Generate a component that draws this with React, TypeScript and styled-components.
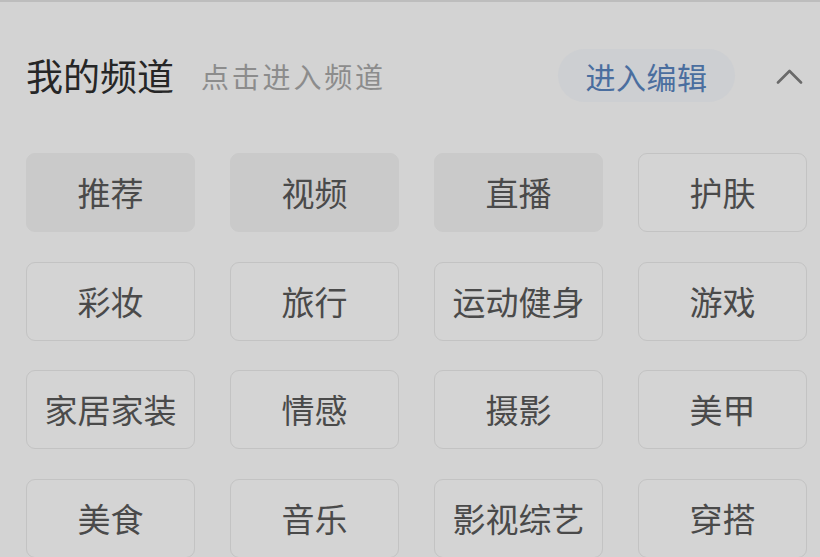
import React from "react";
import styled, { createGlobalStyle } from "styled-components";

const Global = createGlobalStyle`
  html, body { margin: 0; padding: 0; background: #d3d3d3; }
  body { font-family: "Noto Sans CJK SC", "Noto Sans", sans-serif; }
`;

const Page = styled.div`
  width: 820px;
  height: 557px;
  box-sizing: border-box;
  overflow: hidden;
  background: #d3d3d3;
  border-top: 2px solid #bdbdbd;
  padding: 0 13px 0 26px;
`;

const Header = styled.div`
  display: flex;
  align-items: center;
  height: 53px;
  margin-top: 47px;
`;

const Title = styled.div`
  font-size: 37px;
  color: #262626;
  line-height: 1;
`;

const Subtitle = styled.div`
  margin-left: 27px;
  font-size: 28px;
  letter-spacing: 2.8px;
  color: #8c8c8c;
  line-height: 1;
`;

const EditPill = styled.div`
  margin-left: auto;
  width: 177px;
  height: 53px;
  border-radius: 27px;
  background: #cdcfd2;
  display: flex;
  align-items: center;
  justify-content: center;
  font-size: 30px;
  letter-spacing: 0.5px;
  color: #4a6e9f;
  line-height: 1;
`;

const Chevron = styled.div`
  margin-left: 41px;
  margin-right: 4px;
  width: 27px;
  height: 16px;
  display: flex;
`;

const Grid = styled.div`
  margin-top: 51px;
  display: grid;
  grid-template-columns: repeat(4, 169px);
  grid-auto-rows: 79px;
  column-gap: 35px;
  row-gap: 29.5px;
`;

const Tile = styled.div<{ $fixed?: boolean }>`
  box-sizing: border-box;
  display: flex;
  align-items: center;
  justify-content: center;
  font-size: 33px;
  color: #4a4a4a;
  line-height: 1;
  border-radius: 9px;
  background: ${(p) => (p.$fixed ? "#cacaca" : "#d4d4d4")};
  border: 1.5px solid ${(p) => (p.$fixed ? "#cacaca" : "#c3c3c3")};
`;

const channels: { name: string; fixed?: boolean }[] = [
  { name: "推荐", fixed: true },
  { name: "视频", fixed: true },
  { name: "直播", fixed: true },
  { name: "护肤" },
  { name: "彩妆" },
  { name: "旅行" },
  { name: "运动健身" },
  { name: "游戏" },
  { name: "家居家装" },
  { name: "情感" },
  { name: "摄影" },
  { name: "美甲" },
  { name: "美食" },
  { name: "音乐" },
  { name: "影视综艺" },
  { name: "穿搭" },
];

export default function App() {
  return (
    <>
      <Global />
      <Page>
        <Header>
          <Title>我的频道</Title>
          <Subtitle>点击进入频道</Subtitle>
          <EditPill>进入编辑</EditPill>
          <Chevron>
            <svg width="27" height="16" viewBox="0 0 27 16">
              <path d="M2 14.5 L13.5 3 L25 14.5" fill="none" stroke="#6a6a6a" strokeWidth="2.6" strokeLinecap="round" strokeLinejoin="round" />
            </svg>
          </Chevron>
        </Header>
        <Grid>
          {channels.map((c) => (
            <Tile key={c.name} $fixed={c.fixed}>
              {c.name}
            </Tile>
          ))}
        </Grid>
      </Page>
    </>
  );
}
